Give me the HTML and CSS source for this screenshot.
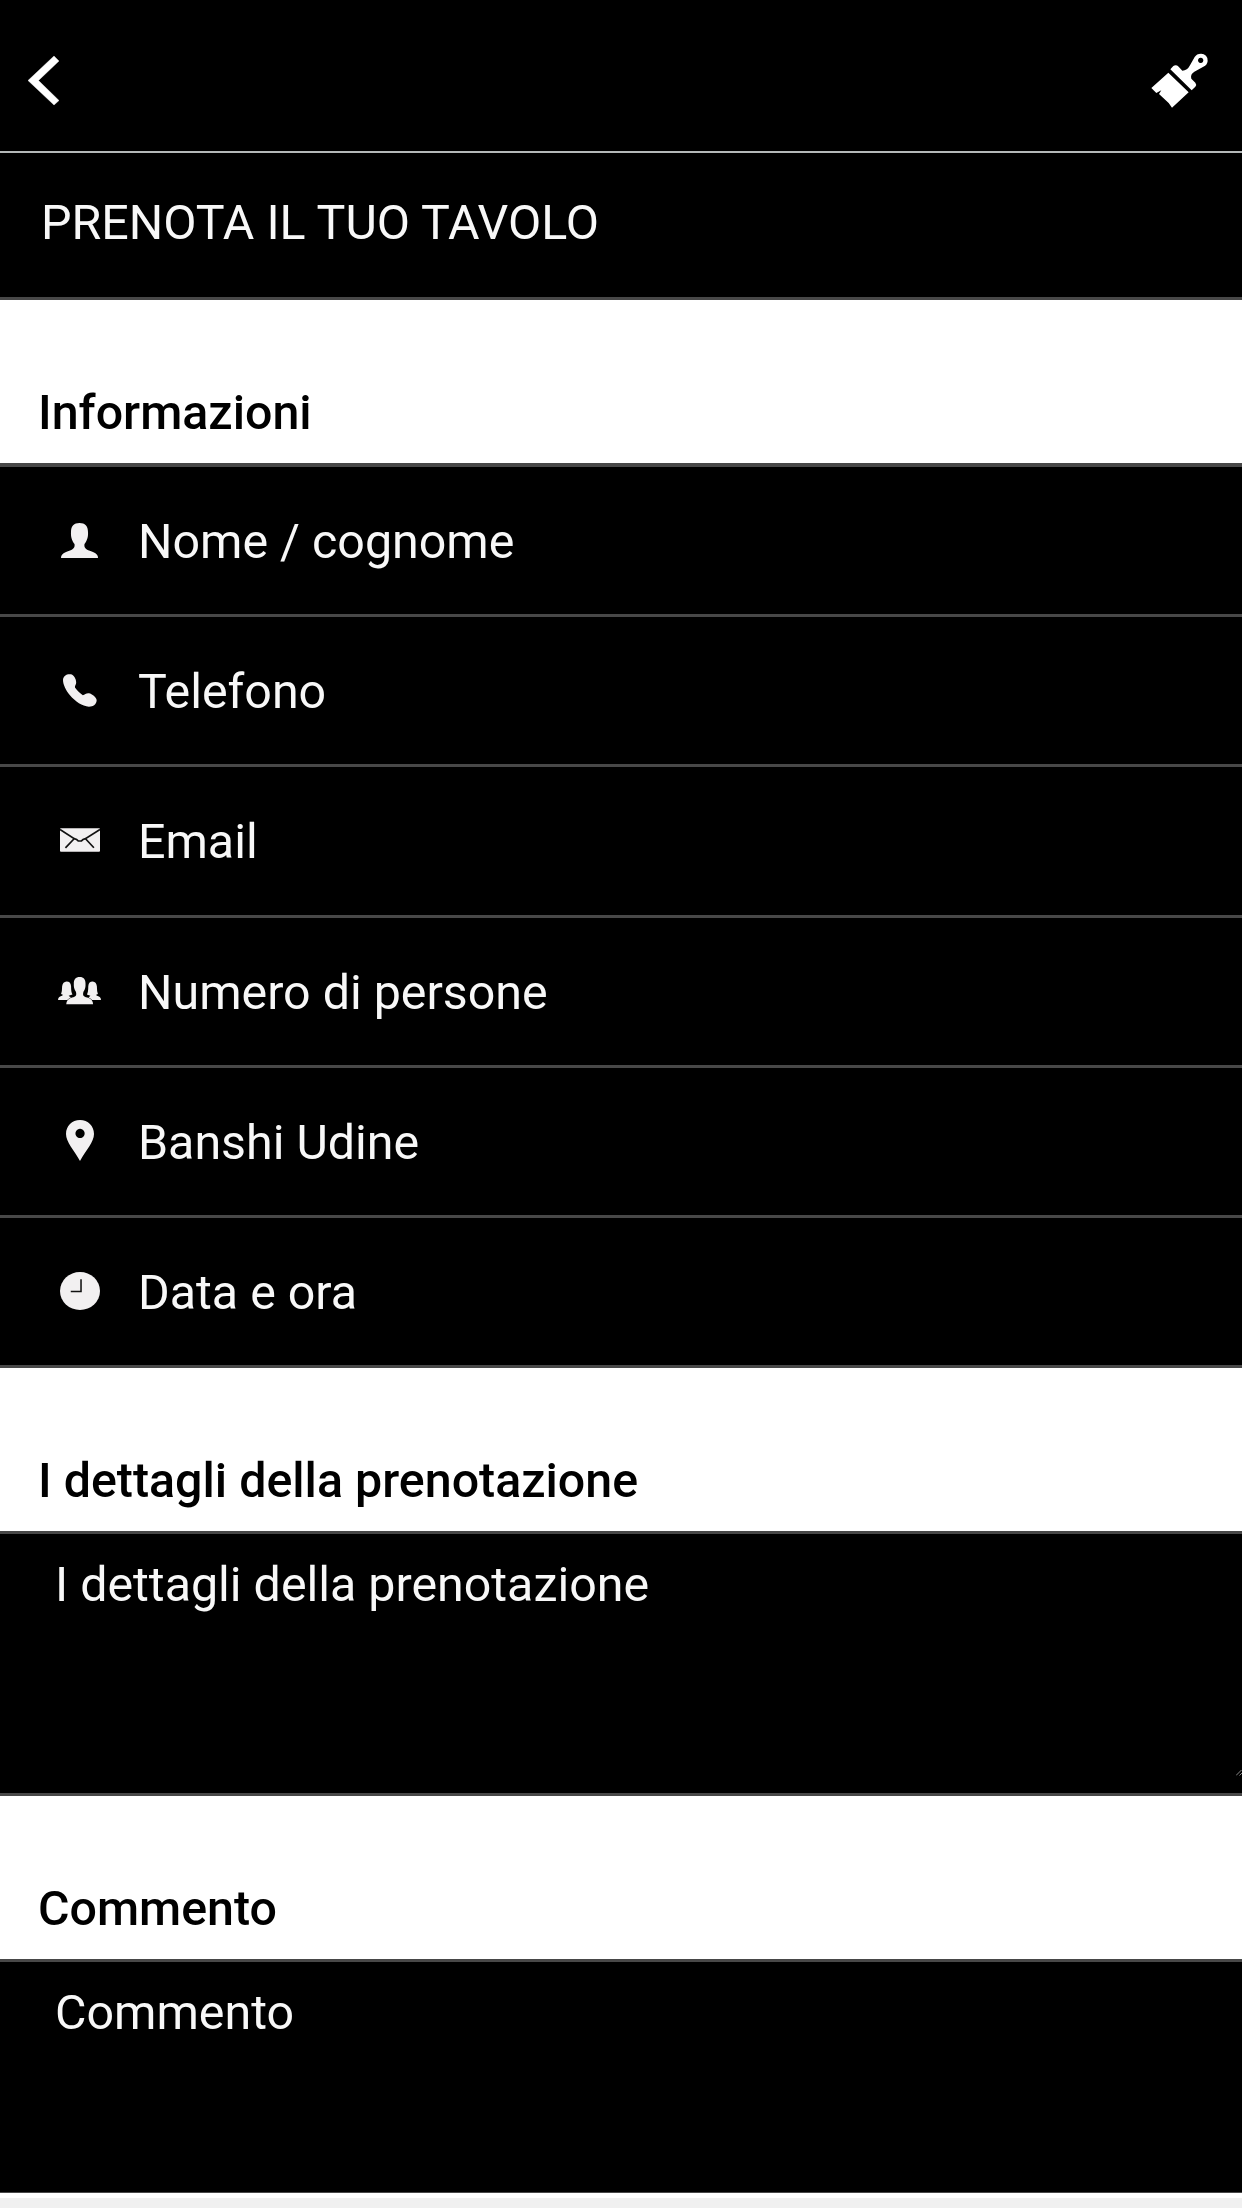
FILE: index.html
```html
<!DOCTYPE html>
<html lang="it">
<head>
<meta charset="utf-8">
<title>Prenota il tuo tavolo</title>
<link rel="stylesheet" href="styles.css">
</head>
<body>
<header class="topbar">
  <svg class="back" viewBox="0 0 31 49"><path d="M26 0L31 5L10.500 24.500L31 44.500L26 49L0 24.500Z"/></svg>
  <svg class="brush" viewBox="150 65 180 171"><path d="M205 127L266 186L216 232L206 218L177 191L184 180L169 188L154 173Z"/><path fill-rule="evenodd" d="M211 117L220 107Q228 102 236 109L247 121Q262 121 270 105L284 80Q290 70 303 70A20 20 0 0 1 323 92Q322 104 310 109L283 124Q270 132 274 145L286 157Q291 163 286 169L275 180ZM302 82a8 8 0 1 0 .1 0Z"/></svg>
</header>
<h1 class="title">PRENOTA IL TUO TAVOLO</h1>
<main>
  <h2 class="section">Informazioni</h2>
  <div class="fields">
    <div class="field"><span class="slot"><svg class="person" viewBox="0 0 37 35"><path d="M18.500 0C24 0 27 3 27 9C27.500 15 25 19 23.500 21C23 24 24 26 28 27.500C34 29.500 37 31 37 35H0C0 31 3 29.500 9 27.500C13 26 14 24 13.500 21C12 19 9.500 15 10 9C10 3 13 0 18.500 0Z"/></svg></span><span class="label">Nome / cognome</span></div>
    <div class="field"><span class="slot"><svg class="phone" viewBox="68 101 101 98"><path d="M68 118C69 106 80 100 92 102C102 106 108 118 107 128C106 134 102 138 104 142C110 150 118 158 127 164C133 162 137 157 145 158C155 160 166 169 168 178C168 190 158 198 145 198C125 196 105 183 88 163C77 150 68 133 68 118Z"/></svg></span><span class="label">Telefono</span></div>
    <div class="field"><span class="slot"><svg class="mail" viewBox="60 567 118 70"><rect x="60" y="567" width="118" height="70" rx="3"/><path class="ink" d="M60 571L102 598Q110 599 114 605H123Q127 599 135 598L178 571M101 599L76 625M136 599L160 625"/></svg></span><span class="label">Email</span></div>
    <div class="field"><span class="slot"><svg class="people" viewBox="52 83 125 82" preserveAspectRatio="none"><path d="M77 96C85 96 89 100 90 110C90 122 91 129 94 134L83 138Q84 141 90 142L79 150H52Q53 141 62 139Q66 138 66 135L61 133Q64 125 64 110Q66 97 77 96ZM153 96C145 96 141 100 140 110C140 122 139 129 136 134L146 138Q146 141 140 142L151 150H177Q176 141 167 139Q163 138 163 135L168 133Q165 125 165 110Q163 97 153 96Z"/><path class="front" d="M115 83C127 83 132 90 132 102Q133 117 126 126C123 136 126 141 137 143Q154 148 154 163H76Q76 148 93 143C104 141 107 136 104 126Q97 117 98 102C98 90 103 83 115 83Z"/></svg></span><span class="label">Numero di persone</span></div>
    <div class="field"><span class="slot"><svg class="pin" viewBox="0 0 28 41"><path fill-rule="evenodd" d="M14 0C22 0 28 6 28 14C28 22 20 30 14 41C8 30 0 22 0 14C0 6 6 0 14 0ZM14 8.800a4.600 4.600 0 1 0 .1 0Z"/></svg></span><span class="label">Banshi Udine</span></div>
    <div class="field"><span class="slot"><svg class="clock" viewBox="0 0 39 37"><ellipse cx="19.500" cy="18.500" rx="19.500" ry="18.500"/><path class="ink" d="M20.500 7V19H10.500"/></svg></span><span class="label">Data e ora</span></div>
  </div>
  <h2 class="section">I dettagli della prenotazione</h2>
  <div class="area">I dettagli della prenotazione<svg class="grip" viewBox="0 0 6 6"><path d="M0 5.500L5.500 0M3.500 5.500L6 3"/></svg></div>
  <h2 class="section">Commento</h2>
  <div class="area last">Commento</div>
</main>
</body>
</html>
```
FILE: styles.css
```css
* { box-sizing: border-box; }
body {
  margin: 0;
  height: 2208px;
  overflow: hidden;
  background: linear-gradient(#fff 0 2198px, #f0f0f0 2198px);
  color: #f8f8f8;
  font: 400 48.35px Roboto, sans-serif;
}
svg { display: block; fill: #f2f0f1; }
.topbar {
  display: flex;
  justify-content: space-between;
  align-items: flex-start;
  height: 153px;
  padding: 52px 32px 0 28px;
  background: #000;
  border-bottom: 2px solid #b4b8b8;
}
.topbar svg { fill: #fff; }
.back { width: 31px; height: 49px; margin-top: 4px; overflow: visible; stroke: #fff; stroke-width: .4; }
.brush { width: 60px; height: 57px; }
.title {
  height: 147px;
  margin: 0;
  padding-left: 41px;
  background: #000;
  border-bottom: 3px solid #484848;
  font-size: 48.35px;
  font-weight: 400;
  line-height: 139px;
  white-space: nowrap;
}
.section {
  height: 163px;
  margin: 0;
  padding: 77px 0 0 38px;
  background: #fff;
  color: #000;
  font-size: 48.35px;
  font-weight: 500;
  line-height: 72px;
  white-space: nowrap;
}
.fields {
  display: grid;
  grid-template-rows: repeat(6, 1fr);
  height: 905px;
  background: #000;
  border-top: 4px solid #484848;
}
.field {
  display: flex;
  align-items: center;
  gap: 37px;
  padding: 3px 0 0 58px;
  border-bottom: 3px solid #484848;
}
.slot { display: flex; justify-content: center; width: 43px; padding-bottom: 4px; }
.label { line-height: 60px; white-space: nowrap; }
.person { width: 37px; height: 35px; }
.phone { width: 34px; height: 33px; }
.mail { width: 40px; height: 24px; }
.people { width: 43px; height: 28px; }
.pin { width: 28px; height: 41px; }
.clock { width: 40px; height: 38px; }
.ink { fill: none; stroke: #111; }
.mail .ink { stroke-width: 5; }
.clock .ink { stroke-width: 1.5; }
.front { stroke: #000; stroke-width: 2; paint-order: stroke; }
.area {
  position: relative;
  height: 265px;
  padding: 20px 0 0 55px;
  background: #000;
  border-top: 3px solid #484848;
  border-bottom: 3px solid #484848;
  line-height: 62px;
  white-space: nowrap;
}
.area.last { height: 234px; border-bottom-width: 1px; }
.grip {
  position: absolute;
  right: 0;
  bottom: 17px;
  width: 6px;
  height: 6px;
  fill: none;
  stroke: #888;
}
```
